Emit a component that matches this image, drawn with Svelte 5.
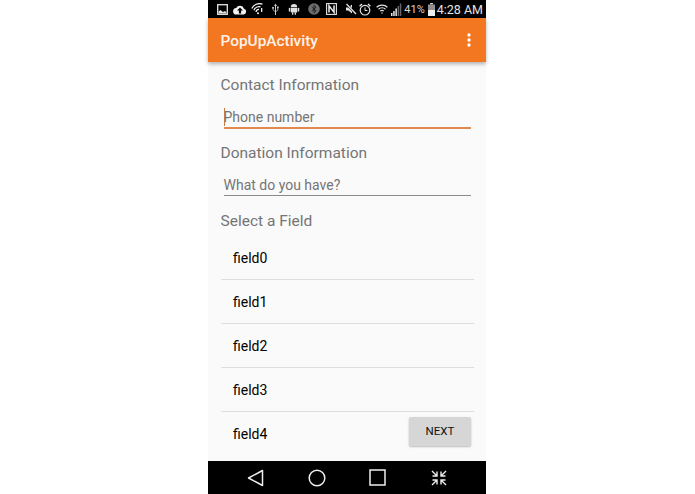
<script>
  const fields = ['field0', 'field1', 'field2', 'field3', 'field4'];
</script>

<div class="page">
  <div class="phone">
    <div class="status">
      <div class="left">
        <svg width="11" height="11" viewBox="0 0 11 11"><rect x="0.7" y="0.7" width="9.6" height="9.6" fill="none" stroke="#e4e4e4" stroke-width="1.3"/><path d="M1.5 9.5 V7.5 L3.5 6 L6 8 L8 7 L9.5 8.5 V9.5Z" fill="#e4e4e4"/></svg>
        <svg class="cloud" width="14" height="11" viewBox="0 0 14 11"><path d="M3.4 10.5 A3.2 3.2 0 0 1 3.2 4.1 A4.2 4.2 0 0 1 11 4.7 A3 3 0 0 1 10.8 10.5Z" fill="#f2f2f2"/><path d="M7 3.4 L10 6.6 H8.1 V9.6 H5.9 V6.6 H4Z" fill="#000"/></svg>
        <svg class="wifi" width="13" height="13" viewBox="0 0 13 13" fill="none" stroke="#f0f0f0" stroke-width="1.3"><path d="M0.8 5.5 A8.5 8.5 0 0 1 11.5 1.2"/><path d="M3 7.2 A5.5 5.5 0 0 1 9.5 3.8"/><path d="M5 9 A3 3 0 0 1 8 6.4"/><circle cx="7" cy="10.3" r="1" fill="#f0f0f0" stroke="none"/><rect x="10" y="5" width="1.3" height="4" fill="#f0f0f0" stroke="none"/></svg>
        <svg class="usb" width="7" height="13" viewBox="0 0 7 13"><path d="M3.5 0.5 L5 3 H4 V12 H3 V3 H2Z" fill="#c8c8c8"/><rect x="5" y="3.5" width="1.7" height="1.7" fill="#c8c8c8"/><circle cx="1" cy="4.8" r="1" fill="#c8c8c8"/><path d="M1 5 V6.8 L3.5 9 M5.8 5 V7.2 L3.5 9" stroke="#c8c8c8" fill="none" stroke-width="0.8"/></svg>
        <svg class="droid" width="12" height="12" viewBox="0 0 12 12"><path d="M2.8 4.2 A3.2 3.2 0 0 1 9.2 4.2Z" fill="#e0e0e0"/><rect x="2.8" y="4.9" width="6.4" height="4.6" fill="#e0e0e0"/><rect x="0.8" y="4.9" width="1.5" height="3.6" fill="#e0e0e0"/><rect x="9.7" y="4.9" width="1.5" height="3.6" fill="#e0e0e0"/><rect x="4" y="9.5" width="1.3" height="2.2" fill="#e0e0e0"/><rect x="6.7" y="9.5" width="1.3" height="2.2" fill="#e0e0e0"/></svg>
      </div>
      <div class="right">
        <svg class="bt" width="12" height="12" viewBox="0 0 12 12"><circle cx="6" cy="6" r="5.8" fill="#6e6e6e"/><path d="M3.8 4 L8 7.8 L6 9.8 V2.2 L8 4.2 L3.8 8" fill="none" stroke="#1c1c1c" stroke-width="0.9"/></svg>
        <svg class="nfc" width="11" height="12" viewBox="0 0 11 12"><rect x="0.6" y="0.6" width="9.8" height="10.8" fill="none" stroke="#e4e4e4" stroke-width="1.1"/><path d="M3 9.5 V2.8 L8 9.2 V2.5" fill="none" stroke="#e4e4e4" stroke-width="1.6"/></svg>
        <svg class="mute" width="12" height="12" viewBox="0 0 12 12"><path d="M1 4.4 H3.4 L7 1.6 V10.4 L3.4 7.6 H1Z" fill="#e4e4e4"/><path d="M1.5 1 L11 11" stroke="#000" stroke-width="2.4"/><path d="M1.5 1 L11 11" stroke="#e4e4e4" stroke-width="1.3"/></svg>
        <svg class="alarm" width="12" height="13" viewBox="0 0 12 13" fill="none" stroke="#e4e4e4"><circle cx="6" cy="7.2" r="4.8" stroke-width="1.2"/><path d="M6 4.4 V7.5 H8.4" stroke-width="1"/><path d="M0.6 3.2 L3 1 M11.4 3.2 L9 1" stroke-width="1.4"/></svg>
        <svg class="wifi2" width="12" height="10" viewBox="0 0 12 10" fill="none" stroke="#e4e4e4" stroke-width="1.2"><path d="M0.6 3.2 A7.8 7.8 0 0 1 11.4 3.2"/><path d="M2.5 5.2 A5 5 0 0 1 9.5 5.2"/><path d="M4.3 7.1 A2.4 2.4 0 0 1 7.7 7.1"/><circle cx="6" cy="9" r="0.7" fill="#e4e4e4" stroke="none"/></svg>
        <svg class="signal" width="11" height="13" viewBox="0 0 11 13"><rect x="0" y="10" width="1.5" height="3" fill="#e4e4e4"/><rect x="2.2" y="8" width="1.5" height="5" fill="#e4e4e4"/><rect x="4.4" y="5.5" width="1.5" height="7.5" fill="#e4e4e4"/><rect x="6.6" y="3" width="1.5" height="10" fill="#666"/><rect x="8.8" y="0.5" width="1.5" height="12.5" fill="#666"/></svg>
        <span class="pct">41%</span>
        <svg class="batt" width="7" height="13" viewBox="0 0 7 13"><rect x="2" y="0" width="3" height="1.5" fill="#c8c8c8"/><rect x="0" y="1.5" width="7" height="11.5" fill="#8f8f8f"/><rect x="0" y="7" width="7" height="6" fill="#eee"/></svg>
        <span class="time">4:28 AM</span>
      </div>
    </div>

    <header class="appbar">
      <span class="title">PopUpActivity</span>
      <svg class="more" width="4" height="14" viewBox="0 0 4 14" fill="#fff"><circle cx="2" cy="2" r="1.7"/><circle cx="2" cy="7" r="1.7"/><circle cx="2" cy="12" r="1.7"/></svg>
    </header>

    <main class="content">
      <h2>Contact Information</h2>
      <div class="input focus"><span class="caret"></span>Phone number</div>
      <h2>Donation Information</h2>
      <div class="input plain">What do you have?</div>
      <h2>Select a Field</h2>
      <ul>
        {#each fields as f}
          <li>{f}</li>
        {/each}
      </ul>
      <button class="next">NEXT</button>
    </main>

    <nav class="navbar">
      <svg class="back" width="17" height="18" viewBox="0 0 17 18" fill="none" stroke="#eee" stroke-width="1.5"><path d="M15.5 1.5 V16.5 L1.5 9Z" stroke-linejoin="round"/></svg>
      <svg width="18" height="18" viewBox="0 0 18 18" fill="none" stroke="#eee" stroke-width="1.5"><circle cx="9" cy="9" r="7.8"/></svg>
      <svg width="17" height="17" viewBox="0 0 17 17" fill="none" stroke="#eee" stroke-width="1.5"><rect x="1" y="1" width="15" height="15"/></svg>
      <svg width="16" height="16" viewBox="0 0 16 16" fill="none" stroke="#eee" stroke-width="1.4"><path d="M1 1 L6 6 M6 1.5 V6 H1.5 M15 1 L10 6 M10 1.5 V6 H14.5 M1 15 L6 10 M6 14.5 V10 H1.5 M15 15 L10 10 M10 14.5 V10 H14.5"/></svg>
    </nav>
  </div>
</div>

<style>
  :global(body) { margin: 0; background: #fff; }
  .page { width: 695px; height: 494px; padding-left: 208px; box-sizing: border-box; overflow: hidden; }
  .phone { width: 278px; height: 494px; display: flex; flex-direction: column; background: #fafafa; font-family: Roboto, sans-serif; }
  .status { height: 18px; flex: none; background: #000; display: flex; align-items: center; justify-content: space-between; padding: 0 3px 0 9px; color: #ddd; }
  .left, .right { display: flex; align-items: center; }
  .cloud { margin-left: 5px; }
  .wifi { margin-left: 4px; }
  .usb { margin-left: 8px; }
  .droid { margin-left: 9px; }
  .nfc { margin-left: 6px; }
  .mute { margin-left: 8px; }
  .alarm { margin-left: 2px; }
  .wifi2 { margin-left: 5px; }
  .signal { margin-left: 3px; }
  .pct { font-size: 11px; margin-left: 2px; color: #d8d8d8; }
  .batt { margin-left: 3px; }
  .time { font-size: 12.5px; margin-left: 2px; color: #e4e4e4; }
  .appbar { height: 44px; flex: none; box-sizing: border-box; background: #f37721; display: flex; align-items: center; justify-content: space-between; padding: 0 15px 0 12.5px; box-shadow: 0 2px 4px rgba(0,0,0,.3); position: relative; z-index: 1; }
  .title { color: #fdf3ea; font-size: 15.4px; font-weight: 500; line-height: 20px; padding-top: 2px; }
  .content { flex: 1; position: relative; padding: 14px 12.5px 0; overflow: hidden; }
  h2 { margin: 0; font-size: 15.5px; line-height: 19px; font-weight: 400; color: #757575; }
  .input { box-sizing: border-box; margin: 13px 3px 15.5px; height: 20.5px; font-size: 14px; line-height: 18px; color: #757575; border-bottom: 1.5px solid #8a8a8a; position: relative; }
  .input.focus { border-bottom: 2px solid #e08a4f; }
  .input.plain { height: 20px; margin-bottom: 16px; }
  .caret { position: absolute; left: 0; top: 0; width: 1.5px; height: 18px; background: #c77a45; }
  ul { list-style: none; margin: 5px 0 0; padding: 0; }
  li { height: 43px; line-height: 45px; padding-left: 12.5px; font-size: 14px; color: #000; border-bottom: 1px solid #dedede; }
  li:last-child { border-bottom: 0; }
  .next { position: absolute; right: 15px; bottom: 15px; width: 62px; height: 29px; border: 0; border-radius: 2px; background: #d6d6d6; font: 400 11.5px Roboto, sans-serif; color: #111; box-shadow: 0 1px 2px rgba(0,0,0,.25); padding: 0 0 1px; }
  .navbar { height: 33px; flex: none; background: #000; display: grid; grid-template-columns: repeat(4, 61px); justify-content: center; justify-items: center; align-items: center; }
  .back { margin-right: 1px; }
</style>
